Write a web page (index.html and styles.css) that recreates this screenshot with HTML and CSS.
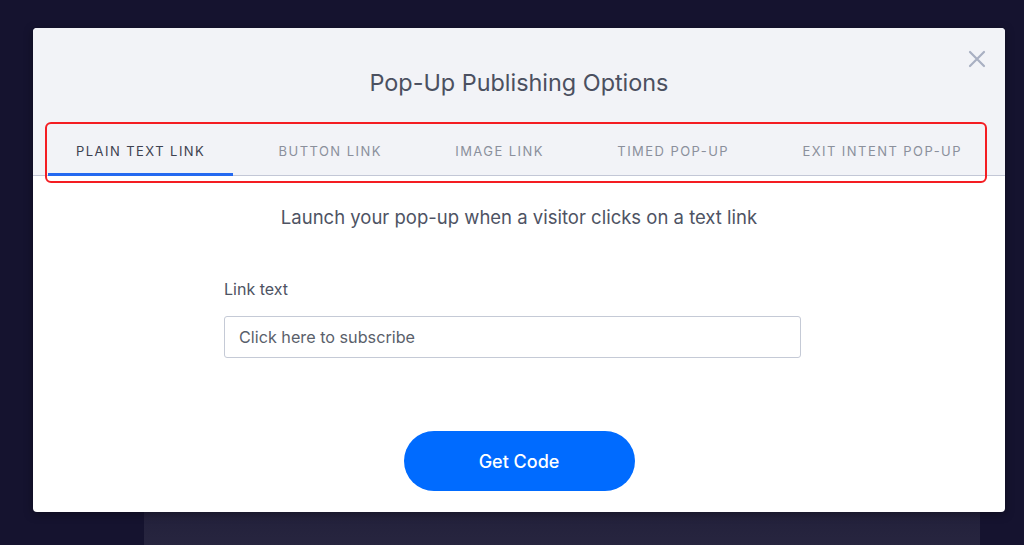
FILE: index.html
```html
<!DOCTYPE html>
<html lang="en">
<head>
  <meta charset="UTF-8">
  <meta name="viewport" content="width=device-width, initial-scale=1.0">
  <title>Pop-Up Publishing Options</title>
  <link rel="stylesheet" href="styles.css">
</head>
<body>

  <!-- Page behind the overlay -->
  <div class="page-panel"></div>

  <!-- Modal -->
  <div class="modal">
    <button class="close-btn" aria-label="Close">
      <svg width="18" height="18" viewBox="0 0 18 18">
        <path d="M2 2 L16 16 M16 2 L2 16" stroke="#a9b0c2" stroke-width="2.2" stroke-linecap="round" fill="none"/>
      </svg>
    </button>

    <div class="modal-header">
      <h1>Pop-Up Publishing Options</h1>

      <div class="tabs">
        <div class="tab active">PLAIN TEXT LINK</div>
        <div class="tab">BUTTON LINK</div>
        <div class="tab">IMAGE LINK</div>
        <div class="tab">TIMED POP-UP</div>
        <div class="tab">EXIT INTENT POP-UP</div>
      </div>

      <!-- Annotation box -->
      <div class="highlight"></div>
    </div>

    <div class="modal-body">
      <p class="intro">Launch your pop-up when a visitor clicks on a text link</p>

      <div class="form-group">
        <label for="linkText">Link text</label>
        <input type="text" id="linkText" placeholder="Click here to subscribe">
      </div>

      <div class="actions">
        <button class="get-code">Get Code</button>
      </div>
    </div>
  </div>

</body>
</html>
```

FILE: styles.css
```css
/* Page */
body {
  margin: 0;
  padding: 0;
  background: #15132f;
  font-family: Inter, "Noto Sans", Arial, sans-serif;
  height: 545px;
  overflow: hidden;
}

.page-panel {
  margin: 490px 0 0 144px;
  width: 836px;
  height: 55px;
  background: linear-gradient(180deg, #1f1d38, #27253f);
}

/* Modal */
.modal {
  position: absolute;
  top: 28px;
  left: 33px;
  width: 972px;
  height: 484px;
  background: #ffffff;
  border-radius: 4px;
  box-shadow: 0 2px 10px rgba(0, 0, 0, 0.35);
  display: flex;
  flex-direction: column;
}

.close-btn {
  position: absolute;
  top: 22px;
  right: 19px;
  z-index: 2;
  padding: 0;
  border: none;
  background: none;
  cursor: pointer;
  line-height: 0;
}

.modal-header {
  position: relative;
  background: #f2f3f7;
  border-radius: 4px 4px 0 0;
  border-bottom: 1px solid #c3c7d6;
  padding-top: 40px;
}

h1 {
  margin: 0;
  text-align: center;
  font-size: 23.4px;
  line-height: 30px;
  font-weight: 400;
  color: #4b5060;
}

.tabs {
  display: flex;
  justify-content: space-between;
  padding: 0 15px;
  margin-top: 32px;
}

.tab {
  padding: 0 28px 0 28px;
  height: 43px;
  line-height: 42px;
  font-size: 13px;
  letter-spacing: 1.45px;
  color: #8b909c;
  border-bottom: 3px solid transparent;
  margin-bottom: -1px;
  white-space: nowrap;
}

.tab.active {
  color: #3d4250;
  border-bottom-color: #2469f0;
}

.highlight {
  position: absolute;
  left: 12px;
  top: 94px;
  width: 938px;
  height: 57px;
  border: 2px solid #f41d22;
  border-radius: 6px;
  pointer-events: none;
}

/* Body */
.modal-body {
  padding-top: 29px;
}

.intro {
  margin: 0;
  text-align: center;
  font-size: 18.5px;
  line-height: 24px;
  color: #4e5363;
}

.form-group {
  margin: 50px 0 0 191px;
  width: 577px;
}

.form-group label {
  display: block;
  font-size: 16px;
  line-height: 20px;
  color: #4e5363;
  margin-bottom: 17px;
}

.form-group input {
  box-sizing: border-box;
  width: 100%;
  height: 42px;
  padding: 0 14px;
  border: 1px solid #c5cad6;
  border-radius: 3px;
  font-family: inherit;
  font-size: 16.2px;
  color: #4b5060;
}

.form-group input::placeholder {
  color: #5a5f6b;
}

.actions {
  display: flex;
  justify-content: center;
  margin-top: 73px;
}

.get-code {
  width: 231px;
  height: 60px;
  border: none;
  border-radius: 30px;
  background: #006bff;
  color: #ffffff;
  font-family: inherit;
  font-size: 18px;
  font-weight: 500;
  cursor: pointer;
}
```
